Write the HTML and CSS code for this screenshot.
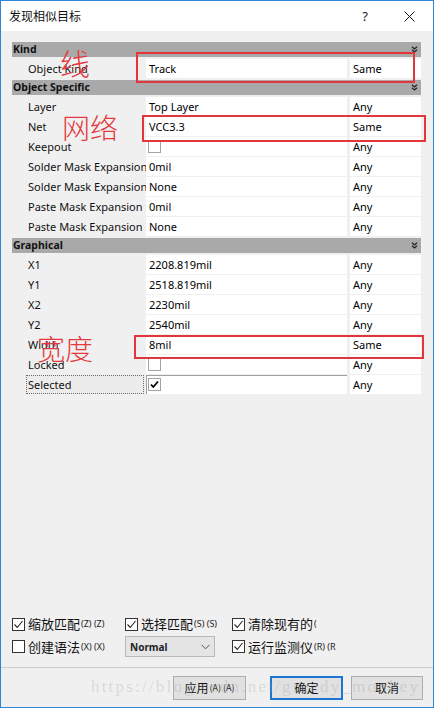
FILE: index.html
```html
<!DOCTYPE html>
<html lang="zh">
<head>
<meta charset="utf-8">
<title>发现相似目标</title>
<link rel="stylesheet" href="styles.css">
</head>
<body>
<div class="window">
  <div class="titlebar">
    <span class="title">发现相似目标</span>
    <span class="help">?</span>
    <svg class="close" width="11" height="11" viewBox="0 0 11 11"><path d="M0.5 0.5 L10.5 10.5 M10.5 0.5 L0.5 10.5" stroke="#111" stroke-width="1" fill="none"/></svg>
  </div>

  <div class="body">
    <div class="grid">
      <div class="section">
        <div class="section-head"><span>Kind</span><svg class="chev" width="7" height="7" viewBox="0 0 7 7"><path d="M1 0.8 L3.5 3 L6 0.8 M1 3.8 L3.5 6 L6 3.8" stroke="#222" stroke-width="1.3" fill="none"/></svg></div>
        <div class="rows">
          <div class="row"><div class="label">Object Kind</div><div class="value">Track</div><div class="cmp">Same</div></div>
        </div>
      </div>

      <div class="section">
        <div class="section-head"><span>Object Specific</span><svg class="chev" width="7" height="7" viewBox="0 0 7 7"><path d="M1 0.8 L3.5 3 L6 0.8 M1 3.8 L3.5 6 L6 3.8" stroke="#222" stroke-width="1.3" fill="none"/></svg></div>
        <div class="rows">
          <div class="row"><div class="label">Layer</div><div class="value">Top Layer</div><div class="cmp">Any</div></div>
          <div class="row"><div class="label">Net</div><div class="value">VCC3.3</div><div class="cmp">Same</div></div>
          <div class="row"><div class="label">Keepout</div><div class="value"><span class="gbox"></span></div><div class="cmp">Any</div></div>
          <div class="row"><div class="label">Solder Mask Expansion</div><div class="value">0mil</div><div class="cmp">Any</div></div>
          <div class="row"><div class="label">Solder Mask Expansion</div><div class="value">None</div><div class="cmp">Any</div></div>
          <div class="row"><div class="label">Paste Mask Expansion</div><div class="value">0mil</div><div class="cmp">Any</div></div>
          <div class="row"><div class="label">Paste Mask Expansion</div><div class="value">None</div><div class="cmp">Any</div></div>
        </div>
      </div>

      <div class="section">
        <div class="section-head"><span>Graphical</span><svg class="chev" width="7" height="7" viewBox="0 0 7 7"><path d="M1 0.8 L3.5 3 L6 0.8 M1 3.8 L3.5 6 L6 3.8" stroke="#222" stroke-width="1.3" fill="none"/></svg></div>
        <div class="rows">
          <div class="row"><div class="label">X1</div><div class="value">2208.819mil</div><div class="cmp">Any</div></div>
          <div class="row"><div class="label">Y1</div><div class="value">2518.819mil</div><div class="cmp">Any</div></div>
          <div class="row"><div class="label">X2</div><div class="value">2230mil</div><div class="cmp">Any</div></div>
          <div class="row"><div class="label">Y2</div><div class="value">2540mil</div><div class="cmp">Any</div></div>
          <div class="row"><div class="label">Width</div><div class="value">8mil</div><div class="cmp">Same</div></div>
          <div class="row"><div class="label">Locked</div><div class="value"><span class="gbox"></span></div><div class="cmp">Any</div></div>
          <div class="row"><div class="label focused"><span class="focus">Selected</span></div><div class="value editing"><span class="gbox"><svg width="11" height="11" viewBox="0 0 11 11"><path d="M2 5.5 L4.3 8 L9 2.5" stroke="#000" stroke-width="1.8" fill="none"/></svg></span></div><div class="cmp">Any</div></div>
        </div>
      </div>
    </div>

    <div class="spacer"></div>

    <div class="options">
      <label class="opt"><span class="cb checked"><svg width="11" height="11" viewBox="0 0 11 11"><path d="M1.5 5.5 L4.3 8.5 L9.5 2" stroke="#222" stroke-width="1.1" fill="none"/></svg></span><span class="zh">缩放匹配</span><span class="key">(Z) (Z)</span></label>
      <label class="opt"><span class="cb checked"><svg width="11" height="11" viewBox="0 0 11 11"><path d="M1.5 5.5 L4.3 8.5 L9.5 2" stroke="#222" stroke-width="1.1" fill="none"/></svg></span><span class="zh">选择匹配</span><span class="key">(S) (S)</span></label>
      <label class="opt"><span class="cb checked"><svg width="11" height="11" viewBox="0 0 11 11"><path d="M1.5 5.5 L4.3 8.5 L9.5 2" stroke="#222" stroke-width="1.1" fill="none"/></svg></span><span class="zh">清除现有的</span><span class="key">(</span></label>

      <label class="opt"><span class="cb"></span><span class="zh">创建语法</span><span class="key">(X) (X)</span></label>
      <div class="select"><span>Normal</span><svg width="9" height="6" viewBox="0 0 9 6"><path d="M0.5 0.8 L4.5 4.8 L8.5 0.8" stroke="#555" stroke-width="1" fill="none"/></svg></div>
      <label class="opt"><span class="cb checked"><svg width="11" height="11" viewBox="0 0 11 11"><path d="M1.5 5.5 L4.3 8.5 L9.5 2" stroke="#222" stroke-width="1.1" fill="none"/></svg></span><span class="zh">运行监测仪</span><span class="key">(R) (R</span></label>
    </div>
  </div>

  <div class="sep"></div>

  <div class="footer">
    <div class="buttons">
      <button class="btn apply"><span class="zh">应用</span><span class="key">(A) (A)</span></button>
      <button class="btn ok"><span class="zh">确定</span></button>
      <button class="btn cancel"><span class="zh">取消</span></button>
    </div>
    <div class="watermark">https://blog.csdn.net/greedy_monkey</div>
  </div>

  <div class="mark box1"></div>
  <div class="mark box2"></div>
  <div class="mark box3"></div>
  <div class="note note1">线</div>
  <div class="note note2">网络</div>
  <div class="note note3">宽度</div>
</div>
</body>
</html>
```

FILE: styles.css
```css
html, body {
  margin: 0;
  padding: 0;
  background: #ffffff;
}

.window {
  position: relative;
  width: 434px;
  height: 708px;
  box-sizing: border-box;
  border: 1px solid #2f86d8;
  background: #f0f0f0;
  display: flex;
  flex-direction: column;
  font-family: "Noto Sans", "Noto Sans CJK SC", sans-serif;
  color: #000;
  overflow: hidden;
}

/* title bar */
.titlebar {
  height: 30px;
  flex: none;
  background: #ffffff;
  display: flex;
  align-items: center;
}
.title {
  margin-left: 8px;
  font-family: "Noto Sans CJK SC", sans-serif;
  font-size: 12px;
  line-height: 14px;
  color: #111;
}
.help {
  margin-left: auto;
  margin-right: 36px;
  font-size: 13px;
  line-height: 14px;
  color: #222;
}
.close {
  margin-right: 18px;
  display: block;
}

/* body */
.body {
  flex: 1;
  display: flex;
  flex-direction: column;
  padding: 11px 12px 0 11px;
}

.grid {
  width: 409px;
}

.section-head {
  height: 15px;
  background: #a9a9a9;
  display: flex;
  align-items: center;
  justify-content: space-between;
  padding: 0 3px 0 1px;
  margin-bottom: 2px;
  font-size: 10.5px;
  font-weight: bold;
  line-height: 15px;
  color: #111;
}
.chev {
  display: block;
}

.rows {
  margin-bottom: 1px;
}

.row {
  display: flex;
  height: 20px;
  font-size: 11px;
}
.label {
  width: 118px;
  padding-left: 16px;
  line-height: 19px;
  white-space: nowrap;
  overflow: hidden;
  color: #111;
}
.value {
  width: 198px;
  height: 19px;
  background: #ffffff;
  padding-left: 3px;
  line-height: 19px;
  white-space: nowrap;
  overflow: hidden;
  display: flex;
  align-items: center;
}
.cmp {
  width: 68px;
  height: 19px;
  margin-left: 3px;
  background: #ffffff;
  padding-left: 3px;
  line-height: 19px;
}

.label.focused {
  padding-left: 14px;
  width: 120px;
}
.focus {
  display: block;
  width: 115px;
  height: 17px;
  line-height: 17px;
  padding-left: 1px;
  border: 1px dotted #6a6a6a;
  background: #ececec;
}
.value.editing {
  box-shadow: inset 1px 1px 0 #a0a0a0;
}

.gbox {
  width: 11px;
  height: 11px;
  margin-left: -1px;
  border: 1px solid #a3a3a3;
  background: #ffffff;
  display: flex;
  align-items: center;
  justify-content: center;
}
.gbox svg {
  display: block;
}

.spacer {
  flex: 1;
}

/* options */
.options {
  display: grid;
  grid-template-columns: 113px 107px 1fr;
  grid-template-rows: 20px 21px;
  row-gap: 2px;
  margin-bottom: 10px;
}
.opt {
  display: flex;
  align-items: center;
  white-space: nowrap;
}
.cb {
  width: 11px;
  height: 11px;
  border: 1px solid #333;
  background: #ffffff;
  margin-right: 3px;
  flex: none;
  display: flex;
  align-items: center;
  justify-content: center;
}
.cb svg {
  display: block;
}
.zh {
  font-family: "Noto Sans CJK SC", sans-serif;
  font-size: 13px;
  line-height: 16px;
  color: #111;
}
.key {
  font-size: 9px;
  line-height: 16px;
  color: #222;
  margin-left: 1px;
}

.select {
  height: 19px;
  border: 1px solid #b9b9b9;
  background: #e5e5e5;
  display: flex;
  align-items: center;
  justify-content: space-between;
  padding: 0 4px;
  width: 80px;
  font-size: 10px;
  font-weight: bold;
  color: #222;
}
.select svg {
  display: block;
}

.sep {
  height: 1px;
  flex: none;
  background: #cdcdcd;
}

/* footer */
.footer {
  flex: none;
  position: relative;
}
.buttons {
  display: flex;
  justify-content: flex-end;
  padding: 8px 10px 7px 0;
}
.btn {
  height: 24px;
  box-sizing: border-box;
  border: 1px solid #adadad;
  background: #e1e1e1;
  margin: 0;
  padding: 0;
  display: flex;
  align-items: center;
  justify-content: center;
  font-family: "Noto Sans CJK SC", sans-serif;
}
.btn .zh {
  font-size: 12px;
}
.apply {
  width: 73px;
  margin-right: 24px;
}
.ok {
  width: 73px;
  margin-right: 8px;
  border: 2px solid #1c76cf;
}
.cancel {
  width: 72px;
}
.watermark {
  position: absolute;
  left: 90px;
  top: 10px;
  font-family: "Liberation Serif", serif;
  font-size: 17px;
  letter-spacing: 2.2px;
  line-height: 18px;
  color: rgba(160, 160, 160, 0.3);
  white-space: nowrap;
  pointer-events: none;
}

/* annotations */
.mark {
  position: absolute;
  box-sizing: border-box;
  border: 2px solid #e2363c;
}
.box1 {
  left: 135px;
  top: 51px;
  width: 279px;
  height: 31px;
}
.box2 {
  left: 141px;
  top: 114px;
  width: 284px;
  height: 27px;
}
.box3 {
  left: 133px;
  top: 334px;
  width: 290px;
  height: 24px;
}

.note {
  position: absolute;
  font-family: "Noto Sans CJK SC", sans-serif;
  font-weight: 300;
  color: #e5393e;
  line-height: 1;
  white-space: nowrap;
}
.note1 {
  left: 59px;
  top: 46px;
  font-size: 30px;
}
.note2 {
  left: 61px;
  top: 112px;
  font-size: 28px;
}
.note3 {
  left: 36px;
  top: 333px;
  font-size: 28px;
}
```
